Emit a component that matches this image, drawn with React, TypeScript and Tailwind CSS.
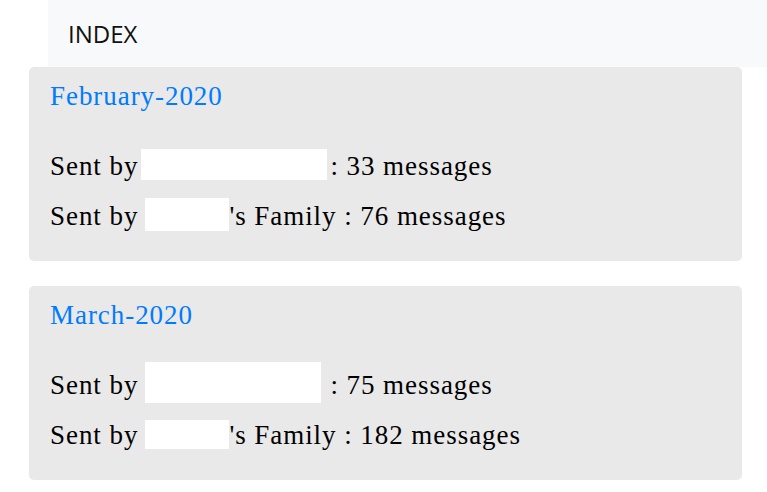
import React from "react";

const serif = { fontFamily: '"Liberation Serif", serif' };

type R = { w: number; h: number; ml: number; mr: number; dy: number };

function Redact({ w, h, ml, mr, dy }: R) {
  return (
    <span
      className="relative inline-block bg-white align-middle"
      style={{ width: w, height: h, marginLeft: ml, marginRight: mr, top: dy }}
    />
  );
}

function Card({ title, line1, line2, r1, r2 }: { title: string; line1: string; line2: string; r1: R; r2: R }) {
  return (
    <div className="ml-[29px] w-[713px] rounded-[5px] bg-[#e9e9e9] pl-[21px] pt-[11px] pb-[27px] text-[27px] tracking-[0.035em] text-black" style={serif}>
      <div className="h-[36px] leading-[36px] text-[#007bff]">{title}</div>
      <div className="mt-[34px] h-[36px] leading-[36px] whitespace-nowrap">
        Sent by
        <Redact {...r1} />
        {line1}
      </div>
      <div className="mt-[14px] h-[36px] leading-[36px] whitespace-nowrap">
        Sent by
        <Redact {...r2} />
        {line2}
      </div>
    </div>
  );
}

export default function App() {
  return (
    <div className="min-h-[492px] w-[767px] bg-white">
      <div className="ml-[48px] flex h-[67px] items-center bg-[#f8f9fa] pl-[20px] text-[24px] text-[#111]" style={{ fontFamily: '"Open Sans", sans-serif' }}>
        INDEX
      </div>
      <Card
        title="February-2020"
        line1=": 33 messages"
        line2="'s Family : 76 messages"
        r1={{ w: 186, h: 31, ml: 3, mr: 3, dy: -4 }}
        r2={{ w: 84, h: 33, ml: 7, mr: 0, dy: -4 }}
      />
      <div className="h-[25px]" />
      <Card
        title="March-2020"
        line1=": 75 messages"
        line2="'s Family : 182 messages"
        r1={{ w: 176, h: 41, ml: 7, mr: 9, dy: -5 }}
        r2={{ w: 84, h: 29, ml: 7, mr: 0, dy: -3 }}
      />
    </div>
  );
}
